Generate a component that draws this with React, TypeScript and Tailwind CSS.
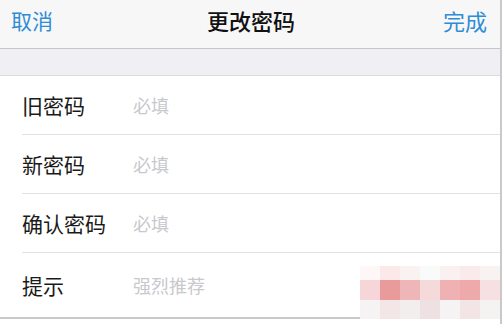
import React from 'react';

type Row = {
    label: string;
    placeholder: string;
};

const rows: Row[] = [
    { label: '旧密码', placeholder: '必填' },
    { label: '新密码', placeholder: '必填' },
    { label: '确认密码', placeholder: '必填' },
    { label: '提示', placeholder: '强烈推荐' },
];

// 右下のモザイク（透かし）
const mosaic: string[][] = [
    ['#fdf7f7', '#fbe9ea', '#faf1f1', '#f9fbfa', '#fbf0f0', '#fbeaeb', '#f8f2f2'],
    ['#f6d6d8', '#e99b9c', '#efb6b7', '#f5dadb', '#f0b1b2', '#eea9aa', '#f6e0e1'],
    ['#f5f3f3', '#f2e6e7', '#f3eeee', '#efe1e1', '#f5f3f3', '#f3e5e6', '#f5f2f2'],
];

const App = () => {
    return (
        <div
            className="relative w-[502px] h-[324px] bg-white overflow-hidden border-r-2 border-[#c9c9c9]"
            style={{ fontFamily: '"Noto Sans CJK SC", "Noto Sans", sans-serif' }}
        >
            {/* ナビゲーションバー */}
            <div className="h-[49px] bg-[#f7f7f8] border-b border-[#c6c6ca] flex items-center justify-between px-[11px] pb-[8px]">
                <span className="text-[21px] text-[#2f8dd5] leading-none">取消</span>
                <span className="text-[22px] font-medium text-[#111] leading-none pl-[6px]">更改密码</span>
                <span className="text-[22px] text-[#2f8dd5] leading-none pr-[2px]">完成</span>
            </div>

            {/* グレーの余白 */}
            <div className="h-[27px] bg-[#efeff4] border-b border-[#dcdce0]" />

            {/* 入力行 */}
            <div className="pl-[22px] border-b-2 border-[#c9c9c9]">
                {rows.map((row, i) => (
                    <div
                        key={row.label}
                        className={`flex items-center ${i === rows.length - 1 ? 'h-[64px]' : 'h-[59px] border-b border-[#e2e2e4]'}`}
                    >
                        <span className="w-[111px] text-[21px] text-[#1a1a1a] leading-none">{row.label}</span>
                        <span className="text-[18px] text-[#c8c8cd] leading-none">{row.placeholder}</span>
                    </div>
                ))}
            </div>

            {/* 透かし */}
            <div className="absolute left-[360px] top-[266px] flex flex-col">
                {mosaic.map((line, r) => (
                    <div key={r} className={`flex ${r === 0 ? 'h-[14px]' : r === 1 ? 'h-[20px]' : 'h-[19px]'}`}>
                        {line.map((c, k) => (
                            <div key={k} className="w-[20px] h-full" style={{ backgroundColor: c }} />
                        ))}
                    </div>
                ))}
            </div>
        </div>
    );
};

export default App;
